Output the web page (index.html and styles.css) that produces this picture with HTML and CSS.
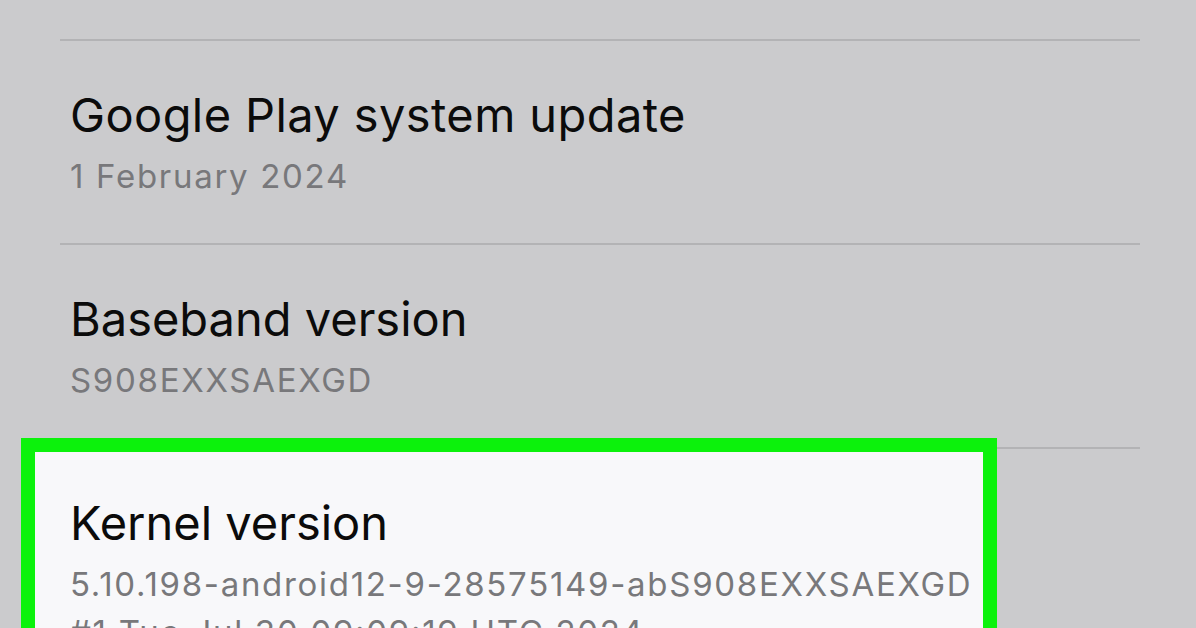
FILE: index.html
```html
<!DOCTYPE html>
<html lang="en">
<head>
<meta charset="utf-8">
<title>Software information</title>
<link rel="stylesheet" href="styles.css">
</head>
<body>
<main class="screen">
  <ul class="list">
    <li class="item">
      <div class="title title-wide">Google Play system update</div>
      <div class="sub">1 February 2024</div>
    </li>
    <li class="item">
      <div class="title">Baseband version</div>
      <div class="sub">S908EXXSAEXGD</div>
    </li>
    <li class="item item-highlight">
      <span class="highlight" aria-hidden="true"></span>
      <div class="title">Kernel version</div>
      <div class="sub">
        <span class="sub-line">5.10.198-android12-9-28575149-abS908EXXSAEXGD</span>
        <span class="sub-line">#1 Tue Jul 30 09:09:19 UTC 2024</span>
      </div>
    </li>
  </ul>
</main>
</body>
</html>
```
FILE: styles.css
```css
html, body {
  margin: 0;
  padding: 0;
}
body {
  width: 1196px;
  height: 628px;
  overflow: hidden;
  background: #cbcbcd;
  font-family: Inter, "Liberation Sans", sans-serif;
}
.screen {
  height: 628px;
  overflow: hidden;
}
.list {
  list-style: none;
  margin: 0;
  padding: 39px 0 0 0;
}
.item {
  position: relative;
  margin: 0 56px 0 60px;
  border-top: 2px solid #b3b3b5;
  padding: 46px 10px 43px 10px;
}
.title {
  position: relative;
  z-index: 1;
  font-size: 47px;
  line-height: 56px;
  color: #0b0b0b;
  font-weight: 400;
}
.title-wide {
  letter-spacing: 0.4px;
}
.sub {
  position: relative;
  z-index: 1;
  margin-top: 9px;
  font-size: 33px;
  line-height: 48px;
  color: #78787b;
  letter-spacing: 1.7px;
}
.sub-line {
  display: block;
  white-space: nowrap;
}
.highlight {
  position: absolute;
  z-index: 0;
  left: -39px;
  top: -11px;
  width: 948px;
  height: 300px;
  border: 14px solid #0cf20c;
  background: #f8f8fa;
}
```
